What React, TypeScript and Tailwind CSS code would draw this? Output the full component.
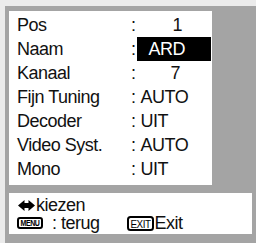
const rows: { label: string; value: React.ReactNode }[] = [
  { label: "Pos", value: <span className="pl-[37px]">1</span> },
  {
    label: "Naam",
    value: (
      <span className="ml-[1px] w-[74px] bg-black pl-[12px] text-white">ARD</span>
    ),
  },
  { label: "Kanaal", value: <span className="pl-[35px]">7</span> },
  { label: "Fijn Tuning", value: <span className="pl-[5px]">AUTO</span> },
  { label: "Decoder", value: <span className="pl-[5px]">UIT</span> },
  { label: "Video Syst.", value: <span className="pl-[5px]">AUTO</span> },
  { label: "Mono", value: <span className="pl-[5px]">UIT</span> },
];

const ArrowIcon = () => (
  <svg width="17" height="11" viewBox="0 0 17 11" className="mr-[1px]">
    <polygon points="0,5.5 6.5,0 6.5,3 10.5,3 10.5,0 17,5.5 10.5,11 10.5,8 6.5,8 6.5,11" fill="#000" />
  </svg>
);

const MenuKey = () => (
  <svg width="26" height="12" viewBox="0 0 26 12">
    <rect x="1" y="1" width="24" height="10" rx="2" fill="#fff" stroke="#000" strokeWidth="2" />
    <text
      x="13"
      y="9.2"
      textAnchor="middle"
      fontSize="8.5"
      fontWeight="bold"
      fontFamily="Liberation Sans, Arial, sans-serif"
      textLength="19"
      lengthAdjust="spacingAndGlyphs"
      fill="#000"
    >
      MENU
    </text>
  </svg>
);

const ExitKey = () => (
  <svg width="27" height="15" viewBox="0 0 27 15">
    <rect x="1" y="1" width="25" height="13" rx="2.5" fill="#fff" stroke="#000" strokeWidth="2" />
    <text
      x="13.5"
      y="11.5"
      textAnchor="middle"
      fontSize="10.5"
      fontFamily="Liberation Sans, Arial, sans-serif"
      textLength="20"
      lengthAdjust="spacingAndGlyphs"
      fill="#000"
    >
      EXIT
    </text>
  </svg>
);

export default function App() {
  return (
    <div className="h-[243px] w-[256px] overflow-hidden bg-[#ebebeb] pl-[5px] pt-[6px] font-['Liberation_Sans',Arial,sans-serif] text-[18px] tracking-[-0.5px] text-[#111]">
      <div className="flex h-[237px] w-[251px] flex-col bg-[#a4a4a4] pl-[4px] pt-[5px]">
        <div className="flex h-[174px] w-[203px] flex-col bg-white pl-[8px] pt-[2px]">
          {rows.map((r) => (
            <div key={r.label} className="flex h-[24px] leading-[24px]">
              <span className="w-[114px] shrink-0">{r.label}</span>
              <span>:</span>
              {r.value}
            </div>
          ))}
        </div>
        <div className="mt-[8px] flex h-[41px] w-[243px] flex-col bg-white pt-[3px] leading-[18px]">
          <div className="flex h-[18px] items-center pl-[9px]">
            <ArrowIcon />
            <span>kiezen</span>
          </div>
          <div className="flex h-[18px] items-center pl-[8px]">
            <MenuKey />
            <span className="ml-[9px]">: terug</span>
            <span className="ml-[27px] flex items-center">
              <ExitKey />
              <span className="ml-[1px]">Exit</span>
            </span>
          </div>
        </div>
      </div>
    </div>
  );
}
